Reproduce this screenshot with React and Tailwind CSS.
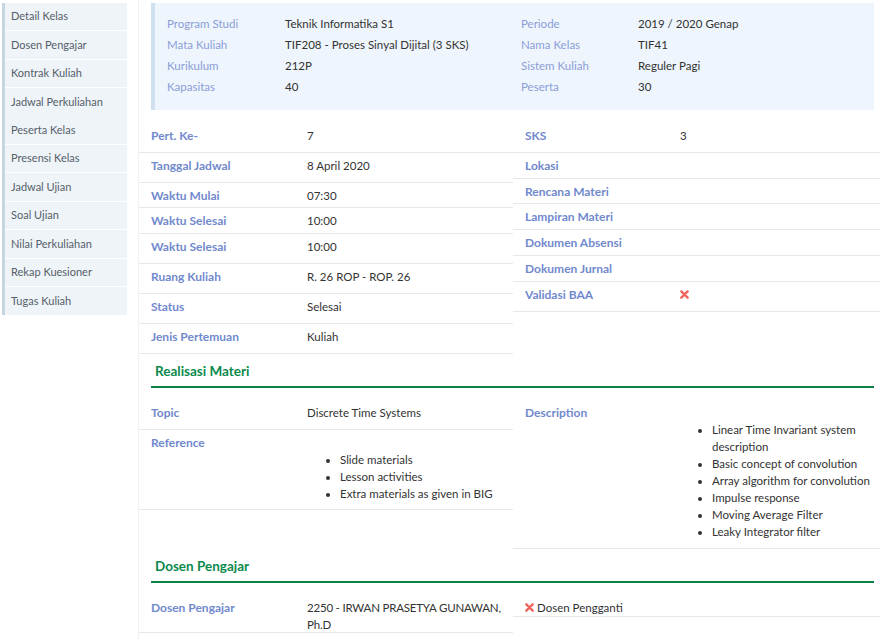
import React from "react";

const sideItems = [
  ["Detail Kelas", true],
  ["Dosen Pengajar", true],
  ["Kontrak Kuliah", true],
  ["Jadwal Perkuliahan", false],
  ["Peserta Kelas", true],
  ["Presensi Kelas", true],
  ["Jadwal Ujian", true],
  ["Soal Ujian", true],
  ["Nilai Perkuliahan", true],
  ["Rekap Kuesioner", true],
  ["Tugas Kuliah", false],
];

const XIcon = () => (
  <svg width="9" height="9" viewBox="0 0 10 10" className="block">
    <path d="M1.5 1.5 L8.5 8.5 M8.5 1.5 L1.5 8.5" stroke="#f2645a" strokeWidth="2.6" strokeLinecap="round" />
  </svg>
);

const leftRows = [
  ["Pert. Ke-", "7", "h-[30px]"],
  ["Tanggal Jadwal", "8 April 2020", "h-[30px]"],
  ["Waktu Mulai", "07:30", "h-[25px]"],
  ["Waktu Selesai", "10:00", "h-[26px]"],
  ["Waktu Selesai", "10:00", "h-[30px]"],
  ["Ruang Kuliah", "R. 26 ROP - ROP. 26", "h-[30px]"],
  ["Status", "Selesai", "h-[30px]"],
  ["Jenis Pertemuan", "Kuliah", "h-[30px]"],
];

const rightRows = [
  ["SKS", "3", "h-[30px]"],
  ["Lokasi", "", "h-[26px]"],
  ["Rencana Materi", "", "h-[25px]"],
  ["Lampiran Materi", "", "h-[26px]"],
  ["Dokumen Absensi", "", "h-[26px]"],
  ["Dokumen Jurnal", "", "h-[26px]"],
  ["Validasi BAA", "x", "h-[30px]"],
];

function Row({ label, children, h, labelW = "w-[156px]" }) {
  return (
    <div className={`box-border flex border-b border-[#e8e8e8] px-[12px] pt-[5px] leading-[16px] ${h}`}>
      <div className={`${labelW} shrink-0 text-[12px] font-bold text-[#7189cd]`}>{label}</div>
      <div className="flex-1 text-[#333]">{children}</div>
    </div>
  );
}

function Heading({ children }) {
  return (
    <div className="ml-[12px] mr-[6px] box-border h-[27px] border-b-2 border-[#0b8146] pl-[4px] text-[13.5px] font-bold leading-[20px] text-[#0b8a4c]">
      {children}
    </div>
  );
}

export default function App() {
  const info = [
    ["Program Studi", "Teknik Informatika S1", "Periode", "2019 / 2020 Genap"],
    ["Mata Kuliah", "TIF208 - Proses Sinyal Dijital (3 SKS)", "Nama Kelas", "TIF41"],
    ["Kurikulum", "212P", "Sistem Kuliah", "Reguler Pagi"],
    ["Kapasitas", "40", "Peserta", "30"],
  ];
  return (
    <div className="flex h-[640px] w-[880px] overflow-hidden bg-white font-['Lato',sans-serif] text-[11.5px] text-[#333]">
      <aside className="ml-[2px] mt-[3px] w-[125px] self-start border-l-[3px] border-[#c7d7e2] bg-[#eef4f8]">
        {sideItems.map(([t, sep], i) => (
          <div
            key={i}
            className={`box-border flex h-[28.4px] items-center pl-[6px] text-[11px] text-[#56606a] ${sep ? "border-b border-white" : ""}`}
          >
            {t}
          </div>
        ))}
      </aside>

      <main className="ml-[11px] flex min-w-0 flex-1 flex-col border-l border-[#f2f2f2]">
        <div className="ml-[12px] mr-[6px] mt-[3px] box-border h-[107px] border-l-4 border-[#cfe1ef] bg-[#eef5fc] pl-[12px] pt-[10px] leading-[21px]">
          {info.map(([l1, v1, l2, v2], i) => (
            <div key={i} className="flex">
              <div className="w-[118px] shrink-0 text-[#8c9dd8]">{l1}</div>
              <div className="w-[236px] shrink-0 text-[#333]">{v1}</div>
              <div className="w-[117px] shrink-0 text-[#8c9dd8]">{l2}</div>
              <div className="text-[#333]">{v2}</div>
            </div>
          ))}
        </div>

        <div className="mt-[13px] flex items-start">
          <div className="w-[374px] shrink-0">
            {leftRows.map(([l, v, h], i) => (
              <Row key={i} label={l} h={h}>
                {v}
              </Row>
            ))}
          </div>
          <div className="flex-1">
            {rightRows.map(([l, v, h], i) => (
              <Row key={i} label={l} h={h} labelW="w-[155px]">
                {v === "x" ? (
                  <span className="flex pt-[3px]">
                    <XIcon />
                  </span>
                ) : (
                  v
                )}
              </Row>
            ))}
          </div>
        </div>

        <div className="mt-[7px]">
          <Heading>Realisasi Materi</Heading>
        </div>

        <div className="mt-[12px] flex items-start">
          <div className="w-[374px] shrink-0">
            <Row label="Topic" h="h-[30px]">
              Discrete Time Systems
            </Row>
            <Row label="Reference" h="h-[80px]">
              <ul className="mt-[16px] list-disc pl-[33px] leading-[17px]">
                <li>Slide materials</li>
                <li>Lesson activities</li>
                <li>Extra materials as given in BIG</li>
              </ul>
            </Row>
          </div>
          <div className="flex-1">
            <Row label="Description" h="h-[149px]" labelW="w-[155px]">
              <ul className="mt-[16px] list-disc whitespace-nowrap pl-[32px] leading-[17px]">
                <li>
                  Linear Time Invariant system
                  <br />
                  description
                </li>
                <li>Basic concept of convolution</li>
                <li>Array algorithm for convolution</li>
                <li>Impulse response</li>
                <li>Moving Average Filter</li>
                <li>Leaky Integrator filter</li>
              </ul>
            </Row>
          </div>
        </div>

        <div className="mt-[7px]">
          <Heading>Dosen Pengajar</Heading>
        </div>

        <div className="mt-[12px] flex items-start">
          <div className="w-[374px] shrink-0">
            <div className="box-border flex h-[38px] border-b border-[#e8e8e8] px-[12px] pt-[4px] leading-[17px]">
              <div className="w-[156px] shrink-0 text-[12px] font-bold text-[#7189cd]">Dosen Pengajar</div>
              <div className="flex-1 whitespace-nowrap tracking-[-0.2px] text-[#333]">
                2250 - IRWAN PRASETYA GUNAWAN,
                <br />
                Ph.D
              </div>
            </div>
          </div>
          <div className="flex-1">
            <div className="box-border flex h-[22px] items-start border-b border-[#e8e8e8] px-[12px] pt-[4px] leading-[17px] text-[#333]">
              <span className="mr-[3px] mt-[4px] flex">
                <XIcon />
              </span>
              Dosen Pengganti
            </div>
          </div>
        </div>
      </main>
    </div>
  );
}
